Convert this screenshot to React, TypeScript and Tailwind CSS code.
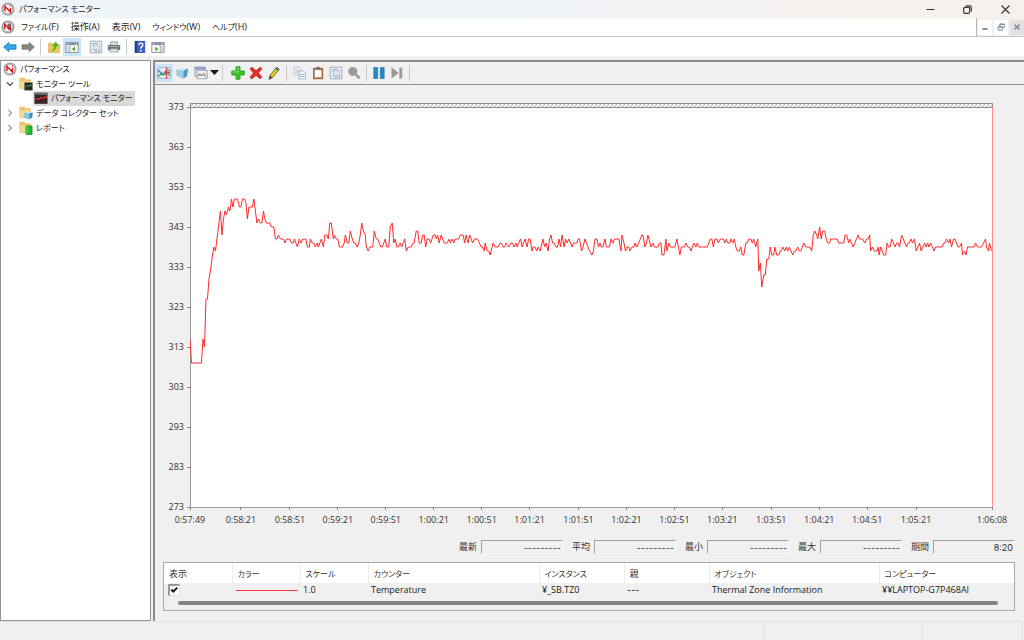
import type { ReactNode } from "react";

const SAMPLES = `0,315 1.5,309 11.5,309 13,315 14.5,313 16,325 17.5,325 19,330 21,333 22.5,336 24,338 25.5,337 27,340 29,344 30.5,347 32,341
33.5,345 35,347 36.5,346 38.5,348 40,347 41.5,350 43,348 44.5,350 47.5,350 49.5,348 51,348 52.5,350 54.5,350 56,349 57.5,345 59,348
62.5,348 64,350 65.5,347 67,344 68.5,345 70.5,344 72,344 73.5,347 75,345 76.5,344 80,344 81.5,343 84,343 85.5,340 87,340 88.5,341
90.5,340 93.5,340 95,339 96.5,340 100,340 101.5,339 103.5,339 104.5,340 107.5,338 109.5,340 111,339 113,340 116,340 117.5,338
119.5,338 120.5,340 122.5,339 124,339 125.5,338 127.5,339 128.5,338 131.5,340 133.5,338 135,341 137,341 138.5,340 140,344 141.5,344
143.5,340 144.5,341 146.5,340 148,340 149.5,338 152.5,338 154.5,339 155.5,341 157.5,339 159,339 160.5,342 162.5,340 164,339
165.5,339 167.5,338 169,339 170.5,341 172,344 173.5,342 175.5,341 176.5,338 178.5,337 180,338 183,338 184.5,342 186.5,340 188,340
191,338 192.5,338 195.5,340 197,338 199,338 200.5,343 202.5,344 204,339 205.5,340 207,338 208.5,338 210.5,339 212,338 215,340
216.5,337 218.5,338 221.5,338 223.5,339 224.5,339 226.5,342 228,342 229.5,339 231.5,339 233,341 234.5,341 236,338 237.5,340
239.5,340 241,339 243.5,341 245.5,341 246.5,340 248,341 249.5,339 251.5,341 254.5,339 257.5,339 259.5,340 260.5,339 262.5,340
264,339 265.5,340 269,340 270.5,341 273.5,341 275,339 276.5,341 278.5,339 280,341 283,339 285,340 288,340 291.5,338 293,338
294.5,337 295.5,339 297.5,337 299,337 300.5,336 302.5,338 303.5,339 305.5,338 308.5,338 310.5,339 312,339 313.5,338 315,338
316.5,339 319.5,338 321.5,339 323,339 324.5,338 326.5,339 327.5,338 331,340 332.5,338 335.5,340 337.5,338 339,340 340.5,340
342.5,337 343.5,338 345.5,338 347,337 348.5,338 350.5,337 353.5,340 355,338 356.5,339 358.5,337 360,340 361.5,341 363,339
364.5,339 366.5,338 368,338 369.5,340 371,338 372.5,341 374.5,338 376,340 377.5,339 379.5,340 382.5,338 384,339 387.5,339
388.5,340 390,340 392,337 393.5,338 395.5,340 400,337 402.5,336 404,337 405.5,340 407.5,340 409,338 410.5,339 412,338 413.5,338
415.5,340 417,338 420,338 421.5,340 423.5,339 425,340 429.5,340 431.5,337 432.5,341 434.5,339 436,337 437.5,338 439.5,338
440.5,337 442.5,338 444.5,338 445.5,339 447.5,338 452.5,341 453.5,341 455.5,338 457,339 458.5,341 461.5,338 463.5,339 465,338
468.5,338 470,339 471.5,339 472.5,336 474.5,336 476.5,340 477.5,337 479.5,339 481,338 485.5,338 487.5,340 490.5,336 492,338
495,338 496.5,339 498.5,338 500,338 501.5,337 504.5,339 506.5,338 508,339 509.5,338 518,338 521,340 522.5,340 524,338 525.5,340
527.5,340 529,339 531,340 534,340 535.5,339 537,340 538.5,339 540.5,339 541.5,340 543.5,339 545,340 546.5,338 548,337 550,337
551.5,338 553,336 554.5,336 556.5,339 558,339 559.5,340 561.5,340 563,339 564.5,340 566.5,338 568.5,340 569.5,332 571,334
572.5,328 574.5,331 576,331 577.5,335 579.5,335 581,338 582.5,336 584.5,336 585.5,338 587.5,336 589.5,336 591,337 592,337
593.5,338 595.5,337 597,338 598.5,337 600,338 603.5,336 605,337 606.5,337 608.5,338 610,337 611.5,337 614.5,339 616.5,338
620.5,338 622.5,337 624,341 625.5,342 627.5,341 628.5,340 630.5,343 632,340 633.5,342 635.5,342 637,340 638.5,339 640.5,339
641.5,340 648,340 649.5,339 654.5,339 656,341 657.5,341 659.5,339 660.5,340 664,338 669,341 670.5,340 673.5,340 675.5,339
677.5,340 679,340 680.5,341 681.5,337 683.5,338 685,337 688,337 689,338 690,336 691.5,338 694.5,336 696.5,336 698,339 699.5,338
701,338 702.5,340 706,338 707.5,339 709,339 710.5,338 712.5,341 717.5,338 719,339 720.5,339 722,340 723.5,339 725.5,340
727,337 730.5,339 732,337 735.5,339 737,338 738.5,339 740,338 741.5,339 745,337 746.5,338 753,338 754.5,339 756,339 757.5,340
759.5,339 761,340 762.5,338 764.5,340 766,340 769,338 770.5,338 772.5,339 773.5,336 775.5,337 777,336 778.5,338 785,338
786.5,339 788.5,338 792.5,338 796.5,340 797.5,338 799.5,337 800.5,339 802.5,337`;

const TRACE = SAMPLES.split(/\s+/)
  .map((pair) => {
    const [x, v] = pair.split(",").map(Number);
    return `${x},${(373 - v) * 4}`;
  })
  .join(" ");

const Y_LABELS = [373, 363, 353, 343, 333, 323, 313, 303, 293, 283, 273];
const X_LABELS: [string, number][] = [
  ["0:57:49", 0],
  ["0:58:21", 51],
  ["0:58:51", 100],
  ["0:59:21", 148],
  ["0:59:51", 196],
  ["1:00:21", 244],
  ["1:00:51", 292],
  ["1:01:21", 340],
  ["1:01:51", 389],
  ["1:02:21", 437],
  ["1:02:51", 485],
  ["1:03:21", 533],
  ["1:03:51", 582],
  ["1:04:21", 630],
  ["1:04:51", 678],
  ["1:05:21", 727],
  ["1:06:08", 803],
];

function Svg({ size = 14, children }: { size?: number; children: ReactNode }) {
  return (
    <svg width={size} height={size} viewBox="0 0 14 14" fill="none" aria-hidden="true" className="shrink-0">
      {children}
    </svg>
  );
}

const Gauge = () => (
  <Svg>
    <circle cx="7" cy="7" r="5.9" fill="#fff" stroke="#a0a0a0" strokeWidth="1.3" />
    <circle cx="7" cy="7" r="4.7" stroke="#7d7d7d" strokeWidth=".6" />
    <path d="M4 9V4.300L9.400 10V6" stroke="#e01b1b" strokeWidth="1.5" />
    <path d="M8.500 3.300l1.800 1.200" stroke="#e01b1b" strokeWidth="1" />
  </Svg>
);
const GaugeDoc = () => (
  <Svg>
    <circle cx="7" cy="7" r="5.9" fill="#fff" stroke="#9a9a9a" strokeWidth="1.3" />
    <circle cx="7" cy="7" r="4.7" stroke="#7d7d7d" strokeWidth=".6" />
    <path d="M6.500 3.500h3.500v6H6.500z" fill="#75686a" />
    <path d="M3.800 9V4.300L9.400 10V6.500" stroke="#d42020" strokeWidth="1.5" />
  </Svg>
);
const Arrow = ({ fill, stroke, flip }: { fill: string; stroke: string; flip?: boolean }) => (
  <Svg>
    <path
      d={flip ? "M13.3 7 8.2 2.300v2.500H1v4.400h7.200v2.500z" : "M.7 7l5.100-4.700v2.500H13v4.400H5.800v2.500z"}
      fill={fill}
      stroke={stroke}
      strokeWidth=".8"
    />
  </Svg>
);
const FolderUp = () => (
  <Svg>
    <path d="M1.5 3.2h4.2L7 4.6h5.5v8h-11z" fill="#edc55c" stroke="#d0a548" strokeWidth=".6" />
    <path d="M3.5 11.5C5.5 10.5 7 8.5 7.4 6.2L5.2 6.4 8.6 1.6l3 4.2-1.9.1C9.2 9 6.8 11.3 3.5 11.5z" fill="#45b92d" />
  </Svg>
);
const WindowPane = ({ right }: { right?: boolean }) => (
  <Svg>
    <path d="M.8 2.5h12.4v10H.8z" fill="#fff" stroke="#87909c" strokeWidth=".9" />
    <path d="M1 2.8h12v2.4H1z" fill="#8793a5" />
    <path d="M2 3.4h1.4v1H2zM10.5 3.4H12v1h-1.5z" fill="#dfe8f2" />
    {right ? (
      <>
        <path d="M9.2 5.5v7" stroke="#87909c" strokeWidth=".8" />
        <path d="M10 7h2.5M10 9h2.5M10 11h2.5" stroke="#7f98bb" strokeWidth=".8" />
        <path d="M4.3 6.6v4.8L7.4 9z" fill="#3fae2c" />
      </>
    ) : (
      <>
        <path d="M5 5.5v7" stroke="#87909c" strokeWidth=".8" />
        <path d="M1.7 7h2.5M1.7 9h2.5M1.7 11h2.5" stroke="#7f98bb" strokeWidth=".8" />
        <path d="M10 6.6v4.8L6.8 9z" fill="#3fae2c" />
      </>
    )}
  </Svg>
);
const Sheet = () => (
  <Svg>
    <path d="M1.2 1.2h11.6v11.6H1.2z" fill="#eef2f7" stroke="#9aa3b0" strokeWidth=".9" />
    <path d="M3 3.5h6M3 5.6h8M3 9.8h2.5" stroke="#9cafc6" strokeWidth=".9" />
    <path d="M4.5 4.8h6v4.7h-6z" fill="#dfe9f5" stroke="#9fb6d0" strokeWidth=".7" />
    <path d="M6 11h2M9.3 11h2" stroke="#77818e" strokeWidth="1.2" />
  </Svg>
);
const Printer = () => (
  <Svg>
    <path d="M3.5 1.8h7v4h-7z" fill="#d5d9de" stroke="#8a8f96" strokeWidth=".7" />
    <path d="M.8 5h12.4v5H.8z" fill="#6f747b" />
    <path d="M1.5 6h11v1h-11z" fill="#a5abb3" />
    <path d="M3.500 8.800h7l.8 3.200H2.700z" fill="#dbe5f1" stroke="#868c94" strokeWidth=".7" />
  </Svg>
);
const Help = () => (
  <Svg>
    <path d="M1.8 1h10.4v12H1.8z" fill="#3f5fc0" />
    <path d="M1.8 1h2v12h-2z" fill="#203c93" />
    <path d="M5.8 5c0-2.6 4-2.5 4 0 0 1.6-2 1.7-2 3.5" stroke="#fff" strokeWidth="1.4" />
    <circle cx="7.8" cy="10.7" r=".9" fill="#fff" />
  </Svg>
);
const Folder = ({ children }: { children: ReactNode }) => (
  <Svg>
    <path d="M.8 1.2h4.7l1.2 1.5h4.8v9H.8z" fill="#eec568" stroke="#d9ae50" strokeWidth=".5" />
    <path d="M.8 4.2h10.7v7.5H.8z" fill="#f7d98e" />
    {children}
  </Svg>
);
const CounterLog = () => (
  <Svg>
    <path d="M.5 1.8h13v11H.5z" fill="#2b2527" />
    <path d="M.5 1.8h13V4H.5z" fill="#6a6264" />
    <path d="M1 9l2.500-1.500L5 8.500l2-2 2 1L11 5.800l2 .2" stroke="#ef2c2c" strokeWidth="1.3" />
    <path d="M1 11.2h12" stroke="#8e2222" strokeWidth=".6" />
  </Svg>
);
const GraphIcon = () => (
  <Svg>
    <path d="M.8 1.8h12.4v10.4H.8z" fill="#edf5fa" stroke="#8aaabd" strokeWidth=".8" />
    <path d="M1 5.3h12M1 8.8h12M4 2v10" stroke="#b6cad6" strokeWidth=".6" />
    <path d="M1 4l3.500 3.500L7 7l3-3 3 1" stroke="#4472b7" strokeWidth="1.2" />
    <path d="M1 10.500l3-2.500 3 1 3-2.500 3 3" stroke="#3c9a4e" strokeWidth="1.300" />
    <path d="M9.500 1v12M8 6.500h5" stroke="#e34343" strokeWidth="1.200" />
  </Svg>
);
const Cube = () => (
  <Svg>
    <path d="M1 3.2l5-1.4 7 .8-4.6 2.2z" fill="#d3eaf3" />
    <path d="M1 3.2l7.4 1.6v7.9L1.8 10z" fill="#9ccde0" />
    <path d="M8.4 4.8L13 2.6l-.8 7.2-3.8 2.9z" fill="#4b9bbb" />
  </Svg>
);
const Report = () => (
  <Svg>
    <path d="M.8 1h10.500v9.500H.8z" fill="#dfe6f3" stroke="#8a93b5" strokeWidth=".8" />
    <path d="M1 1.400h10v2H1z" fill="#8c8fc0" />
    <path d="M3 4.4h10.2v8.3H3z" fill="#f4f6f8" stroke="#8593a8" strokeWidth=".8" />
    <path d="M4 10.5l2-3 1.8 2L10 7l2.2 2.5" stroke="#cf4b4b" strokeWidth=".8" />
    <path d="M4 8l2.5 1.5L9 9l3.2 2" stroke="#4ba05b" strokeWidth=".9" />
  </Svg>
);
const Plus = () => (
  <Svg>
    <path d="M5 .8h4V5h4.2v4H9v4.2H5V9H.8V5H5z" fill="#3ec42e" stroke="#279a1d" strokeWidth=".9" />
    <path d="M5.8 1.8h1.3v4.1H1.8" stroke="#8ae67c" strokeWidth=".8" />
  </Svg>
);
const Cross = () => (
  <Svg>
    <path d="M2.8 1.2L7 4.6l4.4-3.4 1.6 1.6L9.4 7l3.6 3.9-2 1.9L7 9.4l-4.3 3.5L1 11l3.500-4L1 3z" fill="#e4302a" stroke="#bd1b16" strokeWidth=".7" />
  </Svg>
);
const Pencil = () => (
  <Svg>
    <path d="M9.6 1.2l2.6 2L5.6 11.6l-3.4 1.8.6-3.9z" fill="#e3c928" stroke="#6d6a31" strokeWidth=".9" />
    <path d="M9.6 1.2l2.6 2-1.4 1.8-2.6-2z" fill="#526ea5" />
    <path d="M2.8 9.5l2.8 2.1-3.4 1.8z" fill="#4d4d36" />
  </Svg>
);
const Copy = () => (
  <Svg>
    <path d="M1.2 1h4.6l2 2v6H1.2z" fill="#f8fafc" stroke="#a5b0bf" strokeWidth=".8" />
    <path d="M6 5h4.4l2.2 2.2V13H6z" fill="#f4f8fd" stroke="#98a7bb" strokeWidth=".8" />
    <path d="M2.5 4h3M2.5 6h3M7.2 8.5h4M7.2 10.5h4" stroke="#7fa0cb" strokeWidth=".8" />
  </Svg>
);
const Paste = () => (
  <Svg>
    <path d="M2 1.8h10.2v11.4H2z" fill="#a56c35" />
    <path d="M3.7 3.8h6.8v7.6H3.7z" fill="#f7fafd" />
    <path d="M4.7 2.6l1.2-1.8h2.4l1.2 1.8v1.2H4.7z" fill="#6f757c" />
  </Svg>
);
const Magnifier = () => (
  <Svg>
    <circle cx="5.8" cy="5.4" r="4.5" fill="#999" />
    <path d="M9 8.6l3.6 3.8" stroke="#999" strokeWidth="2.8" />
  </Svg>
);
const Pause = () => (
  <Svg>
    <path d="M1.8 1.5h3.9v11H1.8zM8.3 1.5h3.9v11H8.3z" fill="#2487c9" stroke="#176ba5" strokeWidth=".6" />
  </Svg>
);
const Next = () => (
  <Svg>
    <path d="M1.5 1.3L8.6 7l-7.1 5.7zM9.4 1.5h2.8v11H9.4z" fill="#999" />
  </Svg>
);

function Tool({ label, active, children }: { label: string; active?: boolean; children: ReactNode }) {
  return (
    <button
      type="button"
      aria-label={label}
      className={`grid h-[18px] w-[18px] shrink-0 place-items-center ${active ? "bg-[#cce4f7]" : ""}`}
    >
      {children}
    </button>
  );
}
const Sep = () => <span className="mx-[3px] h-4 w-px shrink-0 bg-[#c8c8c8]" />;
const WideSep = () => <span className="mr-1 ml-[3px] h-4 w-px shrink-0 bg-[#c8c8c8]" />;

function Chevron({ open }: { open?: boolean }) {
  return (
    <svg width="8" height="8" viewBox="0 0 8 8" fill="none" aria-hidden="true" className="shrink-0">
      <path d={open ? "M1 2.5l3 3 3-3" : "M2.5 1l3 3-3 3"} stroke={open ? "#444" : "#999"} strokeWidth="1.1" />
    </svg>
  );
}

function Chart() {
  const px = (x: number) => `${(x / 803) * 100}%`;
  return (
    <svg role="img" aria-label="Temperature" className="h-full w-full overflow-visible text-[9px]">
      <defs>
        <pattern id="hatch" width="4" height="4" patternUnits="userSpaceOnUse">
          <path d="M0 4L4 0" stroke="#a5a5a5" strokeWidth=".9" />
        </pattern>
      </defs>
      <rect width="100%" height="100%" fill="#fff" />
      <svg y="-4" width="100%" height="4" overflow="visible">
        <rect width="100%" height="4" fill="#f8f8f8" />
        <rect width="100%" height="4" fill="url(#hatch)" stroke="#8c8c8c" shapeRendering="crispEdges" />
      </svg>
      <line x1="0" y1="0" x2="0" y2="100%" stroke="#9a9a9a" shapeRendering="crispEdges" />
      <line x1="0" y1="100%" x2="100%" y2="100%" stroke="#9a9a9a" shapeRendering="crispEdges" />
      {Y_LABELS.map((v, i) => (
        <g key={v} fill="#333">
          <line x1="-3" x2="0" y1={`${i * 10}%`} y2={`${i * 10}%`} stroke="#888" shapeRendering="crispEdges" />
          <text x="-6" y={`${i * 10}%`} dy="3" textAnchor="end">
            {v}
          </text>
        </g>
      ))}
      {X_LABELS.map(([t, x]) => (
        <svg key={t} x={px(x)} y="100%" width="1" height="1" overflow="visible" fill="#333">
          <line y2="3" stroke="#888" shapeRendering="crispEdges" />
          <text y="16" textAnchor="middle">
            {t}
          </text>
        </svg>
      ))}
      <svg width="100%" height="100%" viewBox="0 0 803 400" preserveAspectRatio="none">
        <polyline points={TRACE} fill="none" stroke="#ff2a2a" strokeWidth="1" vectorEffect="non-scaling-stroke" />
      </svg>
      <line x1="100%" y1="0" x2="100%" y2="100%" stroke="#ff8f8f" shapeRendering="crispEdges" />
    </svg>
  );
}

const MENUS = [
  ["ファイル", "(F)"],
  ["", "操作(A)"],
  ["", "表示(V)"],
  ["ウィンドウ", "(W)"],
  ["ヘルプ", "(H)"],
];

const FIELDS = [
  ["最新", "---------"],
  ["平均", "---------"],
  ["最小", "---------"],
  ["最大", "---------"],
  ["期間", "8:20"],
];

const KANJI = /[\u4e00-\u9fff]/;

export default function App() {
  return (
    <div className="flex h-screen min-h-[400px] flex-col overflow-hidden bg-[#f0f0f0] font-['Open_Sans','Noto_Sans_CJK_JP',sans-serif] text-[9px] leading-3 text-[#1a1a1a] [font-feature-settings:'palt']">
      <header className="flex h-[18px] shrink-0 items-center gap-1 bg-linear-to-r from-[#eff4f9] from-50% to-[#f7f1ed] to-85% pl-px">
        <Gauge />
        <h1 className="flex-1 text-[8px]">パフォーマンス モニター</h1>
        <div className="flex h-full text-[#333]">
          <button type="button" aria-label="最小化" className="grid w-[37px] place-items-center">
            <svg width="9" height="9" viewBox="0 0 9 9" fill="none"><path d="M.5 4.5h8" stroke="currentColor" /></svg>
          </button>
          <button type="button" aria-label="元に戻す" className="grid w-[37px] place-items-center">
            <svg width="9" height="9" viewBox="0 0 9 9" fill="none">
              <rect x=".7" y="2.3" width="6" height="6" rx="1.2" stroke="currentColor" strokeWidth="1.2" />
              <path d="M2.7.8h4a1.6 1.6 0 0 1 1.6 1.6v4" stroke="currentColor" strokeWidth="1.2" />
            </svg>
          </button>
          <button type="button" aria-label="閉じる" className="grid w-[38px] place-items-center">
            <svg width="9" height="9" viewBox="0 0 9 9" fill="none"><path d="M.5.5l8 8M8.5.5l-8 8" stroke="currentColor" strokeWidth="1.1" /></svg>
          </button>
        </div>
      </header>

      <nav className="flex h-[19px] shrink-0 items-center border-b border-[#c4c4c4] bg-white pl-px">
        <GaugeDoc />
        <div className="flex flex-1 gap-3 pl-[6px]">
          {MENUS.map(([kana, rest]) => (
            <button type="button" key={kana + rest}>
              <span className="text-[8px]">{kana}</span>
              {rest}
            </button>
          ))}
        </div>
        <div className="flex h-full items-center gap-[2px] border-l border-[#b4b4b4] bg-[#f0f0f0] pl-px text-[#8193a6]">
          <button type="button" aria-label="子ウィンドウを最小化" className="grid h-[15px] w-[14px] place-items-center bg-white">
            <svg width="8" height="8" viewBox="0 0 8 8"><path d="M1.5 5h5v2h-5z" fill="currentColor" /></svg>
          </button>
          <button type="button" aria-label="子ウィンドウを元に戻す" className="grid h-[15px] w-[14px] place-items-center bg-white">
            <svg width="8" height="8" viewBox="0 0 8 8" fill="none" stroke="currentColor"><path d="M1 3.5h4.3v3.6H1zM1 4.2h4.3M2.8 3V.9h4.5v3.7H6M2.8 1.5h4.5" /></svg>
          </button>
          <button type="button" aria-label="子ウィンドウを閉じる" className="grid h-[15px] w-[14px] place-items-center bg-[#e2e2e2]">
            <svg width="8" height="8" viewBox="0 0 8 8" fill="none"><path d="M1.5 1.5l5 5M6.5 1.5l-5 5" stroke="currentColor" strokeWidth="1.7" /></svg>
          </button>
        </div>
      </nav>

      <div className="flex h-[19px] shrink-0 items-center bg-white pl-px">
        <Tool label="戻る"><Arrow fill="#35a7ea" stroke="#1879bd" /></Tool>
        <Tool label="進む"><Arrow fill="#858585" stroke="#767676" flip /></Tool>
        <WideSep />
        <Tool label="上へ"><FolderUp /></Tool>
        <Tool label="コンソール ツリー" active><WindowPane /></Tool>
        <span className="w-[6px]" />
        <Tool label="プロパティ"><Sheet /></Tool>
        <Tool label="印刷"><Printer /></Tool>
        <WideSep />
        <Tool label="ヘルプ"><Help /></Tool>
        <Tool label="操作ウィンドウ"><WindowPane right /></Tool>
      </div>

      <main className="flex min-h-0 flex-1 gap-[2px] pt-1">
        <aside className="w-[151px] shrink-0 border border-[#8d929b] bg-white pt-px">
          <ul className="grid h-[73px] grid-rows-5 text-[8px]">
            <li className="flex items-center gap-[3px] pl-[2px]"><Gauge />パフォーマンス</li>
            <li className="flex items-center gap-[5px] pl-[5px]">
              <Chevron open />
              <span className="flex items-center gap-[3px]">
                <Folder>
                  <path d="M5.5 5.5h8v7.8h-8z" fill="#252b27" stroke="#777" strokeWidth=".5" />
                  <path d="M6.2 10l2-1.8 1.6 1.5 1.4-2 1.8 1.3" stroke="#48b954" strokeWidth=".9" />
                </Folder>
                モニター ツール
              </span>
            </li>
            <li className="flex pl-8">
              <span className="flex items-center gap-[3px] bg-[#d9d9d9] pr-[2px] pl-px"><CounterLog />パフォーマンス モニター</span>
            </li>
            <li className="flex items-center gap-[5px] pl-[5px]">
              <Chevron />
              <span className="flex items-center gap-[3px]">
                <Folder>
                  <path d="M5 6.5l4-1 4.7.8-3.4 1.3z" fill="#c6e8f5" />
                  <path d="M5 6.5l5.3 1.1v6L5.3 12z" fill="#86c5df" />
                  <path d="M10.3 7.6l3.4-1.3-.4 5.3-3 2z" fill="#3c90b5" />
                </Folder>
                データ コレクター セット
              </span>
            </li>
            <li className="flex items-center gap-[5px] pl-[5px]">
              <Chevron />
              <span className="flex items-center gap-[3px]">
                <Folder>
                  <path d="M7 5h6v8.3H7z" fill="#23bb33" stroke="#167a22" strokeWidth=".8" />
                  <path d="M8 5v8" stroke="#7ce886" strokeWidth=".8" />
                </Folder>
                レポート
              </span>
            </li>
          </ul>
        </aside>

        <section className="flex min-w-0 flex-1 flex-col border-t-2 border-l-2 border-[#8a8a8a]">
          <div className="flex h-[23px] shrink-0 items-center border-b border-[#8f8f8f] pb-px">
            <Tool label="グラフの表示" active><GraphIcon /></Tool>
            <Tool label="ログ データの表示"><Cube /></Tool>
            <button type="button" aria-label="グラフの種類の変更" className="flex h-[18px] items-center gap-[2px] pl-[3px]">
              <Report />
              <svg width="9" height="5" viewBox="0 0 9 5"><path d="M0 0h9L4.5 5z" fill="#111" /></svg>
            </button>
            <WideSep />
            <span className="w-[2px]" />
            <Tool label="追加"><Plus /></Tool>
            <Tool label="削除"><Cross /></Tool>
            <Tool label="強調表示"><Pencil /></Tool>
            <WideSep />
            <Tool label="プロパティのコピー"><Copy /></Tool>
            <Tool label="カウンターの一覧を貼り付け"><Paste /></Tool>
            <Tool label="プロパティ"><Sheet /></Tool>
            <Tool label="拡大"><Magnifier /></Tool>
            <Sep />
            <Tool label="表示の停止"><Pause /></Tool>
            <Tool label="データの更新"><Next /></Tool>
            <Sep />
          </div>

          <div className="min-h-0 flex-1 pt-[22px] pr-8 pb-[33px] pl-[35px]">
            <Chart />
          </div>

          <form className="flex shrink-0 justify-end gap-[9px] pr-[9px] text-[#333]">
            {FIELDS.map(([label, value]) => (
              <label key={label} className="flex items-center gap-[4px]">
                {label}
                <input
                  readOnly
                  value={value}
                  className="h-[14px] w-[82px] border-t border-r border-b border-l border-t-[#a0a0a0] border-r-[#f8f8f8] border-b-[#f8f8f8] border-l-[#a0a0a0] pr-px text-right font-['Inter',sans-serif] outline-none"
                />
              </label>
            ))}
          </form>

          <div className="mt-2 mr-[9px] mb-[10px] ml-[8px] h-[49px] shrink-0 border border-[#a5a9b1]">
            <table className="w-full table-fixed border-collapse text-left">
              <colgroup>
                <col className="w-[68px]" />
                <col className="w-[68px]" />
                <col className="w-[68px]" />
                <col className="w-[171px]" />
                <col className="w-[85px]" />
                <col className="w-[85px]" />
                <col className="w-[170px]" />
                <col />
              </colgroup>
              <thead>
                <tr className="h-5 bg-white text-[#333]">
                  {["表示", "カラー", "スケール", "カウンター", "インスタンス", "親", "オブジェクト", "コンピューター"].map((h) => (
                    <th
                      key={h}
                      className={`border-r border-[#ececec] p-0 pt-[2px] pl-[5px] font-normal last:border-r-0 ${KANJI.test(h) ? "text-[9px]" : "text-[8px]"}`}
                    >
                      {h}
                    </th>
                  ))}
                </tr>
              </thead>
              <tbody>
                <tr className="h-[14px]">
                  <td className="p-0 pl-1">
                    <label className="grid h-3 w-3">
                      <input
                        type="checkbox"
                        defaultChecked
                        aria-label="Temperature を表示"
                        className="peer col-start-1 row-start-1 h-3 w-3 appearance-none border-t-2 border-r border-b border-l-2 border-t-[#999] border-r-[#e3e3e3] border-b-[#e3e3e3] border-l-[#999] bg-white"
                      />
                      <svg viewBox="0 0 12 12" fill="none" className="pointer-events-none invisible col-start-1 row-start-1 h-3 w-3 peer-checked:visible">
                        <path d="M3.3 5.5l2 2.2 4-4" stroke="#111" strokeWidth="1.9" />
                      </svg>
                    </label>
                  </td>
                  <td className="p-0 pr-[2px] pl-1"><div className="h-px bg-[#ff3b3b]" /></td>
                  <td className="p-0 pl-[3px]">1.0</td>
                  <td className="p-0 pl-[3px]">Temperature</td>
                  <td className="p-0 pl-[3px]">¥_SB.TZ0</td>
                  <td className="p-0 pl-[3px] font-['Inter',sans-serif]">---</td>
                  <td className="p-0 pl-[3px]">Thermal Zone Information</td>
                  <td className="p-0 pl-[3px]">¥¥LAPTOP-G7P468AI</td>
                </tr>
              </tbody>
            </table>
            <div className="mt-1 mr-4 ml-[14px] h-1 rounded-full bg-[#868686]" />
          </div>
        </section>
      </main>

      <footer className="flex h-[19px] shrink-0 justify-end border-t border-[#e2e2e2] pr-px">
        <span className="w-[158px] border-l border-[#e0e0e0]" />
        <span className="w-[101px] border-x border-[#e0e0e0]" />
      </footer>
    </div>
  );
}
